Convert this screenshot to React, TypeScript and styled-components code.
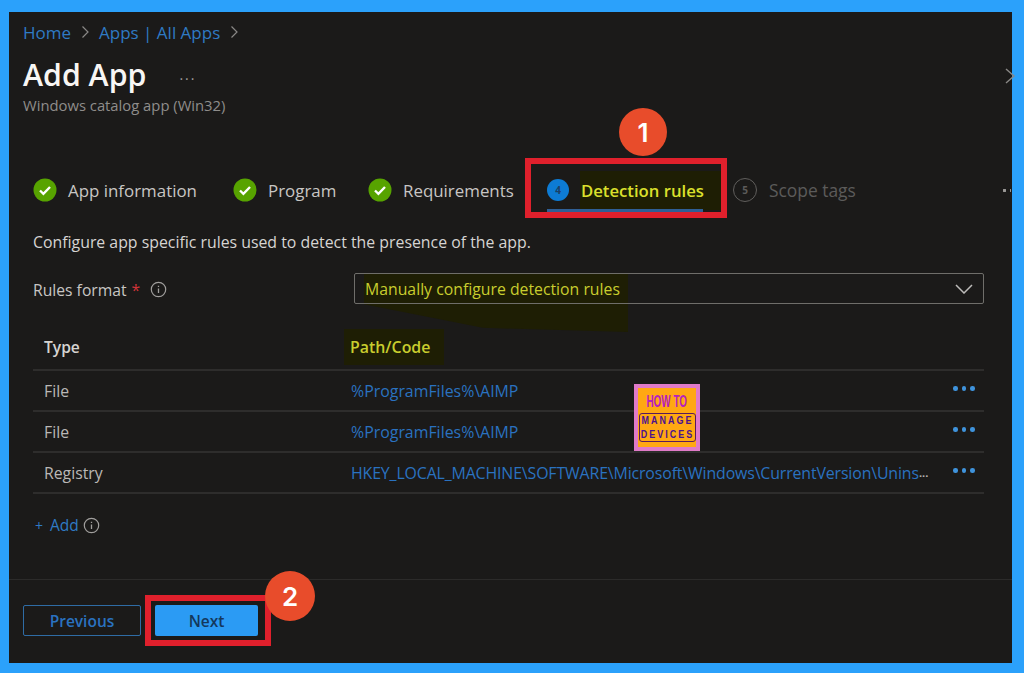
import React from "react";
import styled, { createGlobalStyle } from "styled-components";

const GlobalStyle = createGlobalStyle`
  html, body {
    margin: 0;
    padding: 0;
    background: #2ba1fb;
  }
  * {
    box-sizing: border-box;
  }
`;

const Page = styled.div`
  width: 1024px;
  height: 673px;
  overflow: hidden;
  background: #2ba1fb;
  padding: 12px 12px 10px 9px;
  font-family: "Open Sans", "Liberation Sans", sans-serif;
`;

const Panel = styled.div`
  position: relative;
  isolation: isolate;
  width: 100%;
  height: 100%;
  background: #1b1a19;
  display: flex;
  flex-direction: column;
`;

const Header = styled.div`
  padding: 8px 0 0 14px;
  height: 146px;
`;

const Crumbs = styled.div`
  display: flex;
  align-items: center;
  gap: 9.5px;
  height: 24px;
  font-size: 17px;
  color: #2f7ac4;
`;

const Chevron = styled.svg`
  width: 9px;
  height: 14px;
  fill: none;
  stroke: #8a8886;
  stroke-width: 1.2;
`;

const TitleRow = styled.div`
  display: flex;
  align-items: center;
  gap: 33px;
  margin-top: 11px;
  height: 38px;
`;

const Title = styled.h1`
  margin: 0;
  font-size: 30.3px;
  font-weight: 600;
  color: #f8f6f4;
`;

const More = styled.span`
  color: #a19f9d;
  font-size: 14px;
  letter-spacing: 2px;
`;

const Subtitle = styled.div`
  margin-top: 2px;
  font-size: 14.8px;
  color: #8f8d8b;
`;

const CloseMark = styled.svg`
  position: absolute;
  top: 56px;
  right: -3px;
  width: 10px;
  height: 16px;
  fill: none;
  stroke: #8a8886;
  stroke-width: 1.4;
`;

const Steps = styled.div`
  display: flex;
  align-items: center;
  height: 60px;
  padding-left: 24px;
`;

const Step = styled.div<{ $width: number }>`
  display: flex;
  align-items: center;
  gap: 11px;
  width: ${({ $width }) => $width}px;
  margin-top: 4px;
  font-size: 16.9px;
  color: #c8c6c4;
`;

const DoneBadge = styled.svg`
  width: 24px;
  height: 24px;
  flex: none;
`;

const ActiveStep = styled.div`
  position: relative;
  display: flex;
  align-items: center;
  width: 202px;
  height: 60px;
  padding: 4px 0 0 16px;
  border: 6px solid #e0202c;
  font-size: 16.7px;
  font-weight: 600;
  color: #dbe02c;
`;

const ActiveNumber = styled.span`
  display: flex;
  align-items: center;
  justify-content: center;
  flex: none;
  width: 22px;
  height: 22px;
  margin-right: 11px;
  border-radius: 50%;
  background: #0d7bd4;
  color: #1b3f66;
  font-size: 10px;
  font-weight: 700;
`;

const ActiveLabel = styled.span`
  flex: 1;
  background: #1e1e04;
  padding: 8px 0 8px 1px;
  white-space: nowrap;
`;

const ActiveBar = styled.span`
  position: absolute;
  left: 16px;
  bottom: 0;
  width: 156px;
  height: 3px;
  background: #2f5f96;
`;

const PendingStep = styled.div`
  display: flex;
  align-items: center;
  gap: 12px;
  margin: 4px 0 0 6px;
  font-size: 17.4px;
  color: #5c5b5a;
`;

const PendingNumber = styled.span`
  display: flex;
  align-items: center;
  justify-content: center;
  width: 24px;
  height: 24px;
  border: 1.5px solid #605e5c;
  border-radius: 50%;
  font-size: 10px;
  font-weight: 700;
`;

const StepsMore = styled.span`
  position: absolute;
  top: 177px;
  right: 1px;
  width: 10px;
  height: 3px;
  background: radial-gradient(circle, #9a9896 1.4px, transparent 1.6px) 0 0 / 7px 3px repeat-x;
`;

const Body = styled.div`
  flex: 1;
  padding: 12px 28px 0 24px;
`;

const Intro = styled.p`
  margin: 0;
  font-size: 15.85px;
  line-height: 24px;
  color: #d6d4d2;
`;

const FormRow = styled.div`
  display: flex;
  align-items: center;
  height: 31px;
  margin-top: 19px;
`;

const FormLabel = styled.div`
  display: flex;
  align-items: center;
  width: 321px;
  padding-top: 2px;
  font-size: 15.7px;
  color: #c8c6c4;
`;

const Required = styled.span`
  margin-left: 5px;
  color: #d13438;
`;

const InfoIcon = styled.svg<{ $gap: number }>`
  width: 17px;
  height: 17px;
  margin-left: ${({ $gap }) => $gap}px;
  fill: none;
  stroke: #a19f9d;
`;

const Select = styled.div`
  position: relative;
  flex: 1;
  height: 31px;
  display: flex;
  align-items: center;
  justify-content: space-between;
  padding: 1px 10px 0;
  border: 1.5px solid #6f6e6a;
  border-radius: 2px;
  font-size: 15.8px;
  color: #c9cd2e;
`;

const SelectGlow = styled.span`
  position: absolute;
  top: -1px;
  left: 9px;
  z-index: -1;
  width: 264px;
  height: 59px;
  background: #1e1e04;
  clip-path: polygon(0 0, 100% 0, 100% 100%, 45% 93%, 0 53%);
`;

const Caret = styled.svg`
  width: 18px;
  height: 10px;
  fill: none;
  stroke: #bebcba;
  stroke-width: 1.5;
`;

const Table = styled.div`
  margin-top: 20px;
`;

const Row = styled.div<{ $head?: boolean }>`
  display: grid;
  grid-template-columns: 307px 1fr 47px;
  align-items: center;
  height: ${({ $head }) => ($head ? "47px" : "41px")};
  padding-left: 11px;
  border-bottom: 2px solid #2e2d2c;
`;

const HeadCell = styled.div`
  font-size: 15.6px;
  font-weight: 600;
  color: #d6d4d2;
`;

const PathHead = styled.div`
  justify-self: start;
  margin-left: -7px;
  width: 100px;
  padding: 7px 0 7px 6px;
  background: #1e1e04;
  font-size: 15.9px;
  font-weight: 600;
  color: #c9cd2e;
`;

const Cell = styled.div`
  font-size: 15.8px;
  color: #bab8b6;
`;

const PathCell = styled.div`
  display: flex;
  align-items: center;
  white-space: nowrap;
  font-size: 15.9px;
  color: #2a72c0;
`;

const LongPath = styled.span`
  letter-spacing: -0.14px;
`;

const Ellipsis = styled.span`
  color: #b5b3b1;
  font-weight: 700;
  font-size: 11px;
`;

const RowDots = styled.div`
  display: flex;
  gap: 4px;
  padding: 0 0 4px 16px;
`;

const Dot = styled.span`
  width: 4.5px;
  height: 4.5px;
  border-radius: 50%;
  background: #3f93dc;
`;

const AddRow = styled.div`
  display: flex;
  align-items: center;
  height: 22px;
  margin-top: 20px;
  padding-left: 2px;
  font-size: 15.5px;
  color: #2f7ac4;
`;

const Plus = styled.span`
  margin-right: 7px;
  font-size: 14px;
`;

const Footer = styled.div`
  display: flex;
  align-items: center;
  gap: 4px;
  height: 84px;
  padding: 0 0 2px 14px;
  border-top: 1px solid #2c2b2a;
`;

const Button = styled.div`
  display: flex;
  align-items: center;
  justify-content: center;
  width: 118px;
  height: 31px;
  border: 1px solid #2f6ca5;
  border-radius: 2px;
  font-size: 15.5px;
  font-weight: 600;
  color: #2a72c0;
`;

const NextFrame = styled.div`
  padding: 4px 7px 4px 4px;
  border: 6px solid #e0202c;
`;

const NextButton = styled(Button)`
  width: 103px;
  border: none;
  background: #2b9bf4;
  color: #14385c;
`;

const Callout = styled.span<{ $top: number; $left: number; $size: number }>`
  position: absolute;
  top: ${({ $top }) => $top}px;
  left: ${({ $left }) => $left}px;
  display: flex;
  align-items: center;
  justify-content: center;
  width: ${({ $size }) => $size}px;
  height: ${({ $size }) => $size}px;
  border-radius: 50%;
  background: #e84c2b;
  color: #fff;
  font-family: "Inter", "Liberation Sans", sans-serif;
  font-size: 26px;
  font-weight: 600;
`;

const Logo = styled.div`
  position: absolute;
  top: 372px;
  left: 625px;
  width: 66px;
  height: 67px;
  padding: 4px;
  background: #e07ac8;
`;

const LogoInner = styled.div`
  display: flex;
  flex-direction: column;
  align-items: center;
  width: 100%;
  height: 100%;
  padding-top: 4px;
  background: #ffa812;
  font-family: "Liberation Sans", sans-serif;
`;

const LogoTop = styled.div`
  font-size: 16px;
  line-height: 19px;
  font-weight: 700;
  transform: scaleX(0.62);
  color: #b520c0;
  white-space: nowrap;
`;

const LogoBox = styled.div`
  width: 57px;
  margin-top: 2px;
  border: 1.5px solid #5a1a5c;
  border-radius: 3px;
  color: #4b1290;
  font-size: 11.5px;
  line-height: 13.5px;
  font-weight: 700;
  text-align: center;
  white-space: nowrap;
`;

const LogoLine = styled.div`
  margin: 0 -20px;
  transform: scaleX(0.78);
  letter-spacing: 2.6px;
`;

const InfoGlyph = ({ gap }: { gap: number }) => (
  <InfoIcon $gap={gap} viewBox="0 0 17 17">
    <circle cx="8.5" cy="8.5" r="7.2" strokeWidth="1.2" />
    <path d="M8.5 7.4v4.6M8.5 4.8v1.3" strokeWidth="1.3" />
  </InfoIcon>
);

const Done = () => (
  <DoneBadge viewBox="0 0 24 24">
    <circle cx="12" cy="12" r="11.5" fill="#57a300" />
    <path d="M7 12.5l3.4 3.3L17 9" fill="none" stroke="#fff" strokeWidth="2.4" />
  </DoneBadge>
);

const rules = [
  { type: "File", path: "%ProgramFiles%\\AIMP" },
  { type: "File", path: "%ProgramFiles%\\AIMP" },
  {
    type: "Registry",
    path: "HKEY_LOCAL_MACHINE\\SOFTWARE\\Microsoft\\Windows\\CurrentVersion\\Unins",
    cut: true,
  },
];

export default function App() {
  return (
    <Page>
      <GlobalStyle />
      <Panel>
        <Header>
          <Crumbs>
            <span>Home</span>
            <Chevron viewBox="0 0 9 14">
              <path d="M1.5 1.5L7 7l-5.5 5.5" />
            </Chevron>
            <span>Apps | All Apps</span>
            <Chevron viewBox="0 0 9 14">
              <path d="M1.5 1.5L7 7l-5.5 5.5" />
            </Chevron>
          </Crumbs>
          <TitleRow>
            <Title>Add App</Title>
            <More>...</More>
          </TitleRow>
          <Subtitle>Windows catalog app (Win32)</Subtitle>
        </Header>
        <CloseMark viewBox="0 0 10 16">
          <path d="M1 1l8 7-8 7" />
        </CloseMark>
        <Steps>
          <Step $width={200}>
            <Done />
            App information
          </Step>
          <Step $width={135}>
            <Done />
            Program
          </Step>
          <Step $width={157}>
            <Done />
            Requirements
          </Step>
          <ActiveStep>
            <ActiveNumber>4</ActiveNumber>
            <ActiveLabel>Detection rules</ActiveLabel>
            <ActiveBar />
          </ActiveStep>
          <PendingStep>
            <PendingNumber>5</PendingNumber>
            Scope tags
          </PendingStep>
        </Steps>
        <StepsMore />
        <Body>
          <Intro>Configure app specific rules used to detect the presence of the app.</Intro>
          <FormRow>
            <FormLabel>
              Rules format
              <Required>*</Required>
              <InfoGlyph gap={10} />
            </FormLabel>
            <Select>
              <SelectGlow />
              <span>Manually configure detection rules</span>
              <Caret viewBox="0 0 18 10">
                <path d="M1 1l8 8 8-8" />
              </Caret>
            </Select>
          </FormRow>
          <Table>
            <Row $head>
              <HeadCell>Type</HeadCell>
              <PathHead>Path/Code</PathHead>
            </Row>
            {rules.map((rule, i) => (
              <Row key={i}>
                <Cell>{rule.type}</Cell>
                <PathCell>
                  {rule.cut ? (
                    <>
                      <LongPath>{rule.path}</LongPath>
                      <Ellipsis>...</Ellipsis>
                    </>
                  ) : (
                    rule.path
                  )}
                </PathCell>
                <RowDots>
                  <Dot />
                  <Dot />
                  <Dot />
                </RowDots>
              </Row>
            ))}
          </Table>
          <AddRow>
            <Plus>+</Plus>
            Add
            <InfoGlyph gap={4} />
          </AddRow>
        </Body>
        <Footer>
          <Button>Previous</Button>
          <NextFrame>
            <NextButton>Next</NextButton>
          </NextFrame>
        </Footer>
        <Callout $top={96} $left={610} $size={48}>1</Callout>
        <Callout $top={559} $left={256} $size={50}>2</Callout>
        <Logo>
          <LogoInner>
            <LogoTop>HOW TO</LogoTop>
            <LogoBox>
              <LogoLine>MANAGE</LogoLine>
              <LogoLine>DEVICES</LogoLine>
            </LogoBox>
          </LogoInner>
        </Logo>
      </Panel>
    </Page>
  );
}
